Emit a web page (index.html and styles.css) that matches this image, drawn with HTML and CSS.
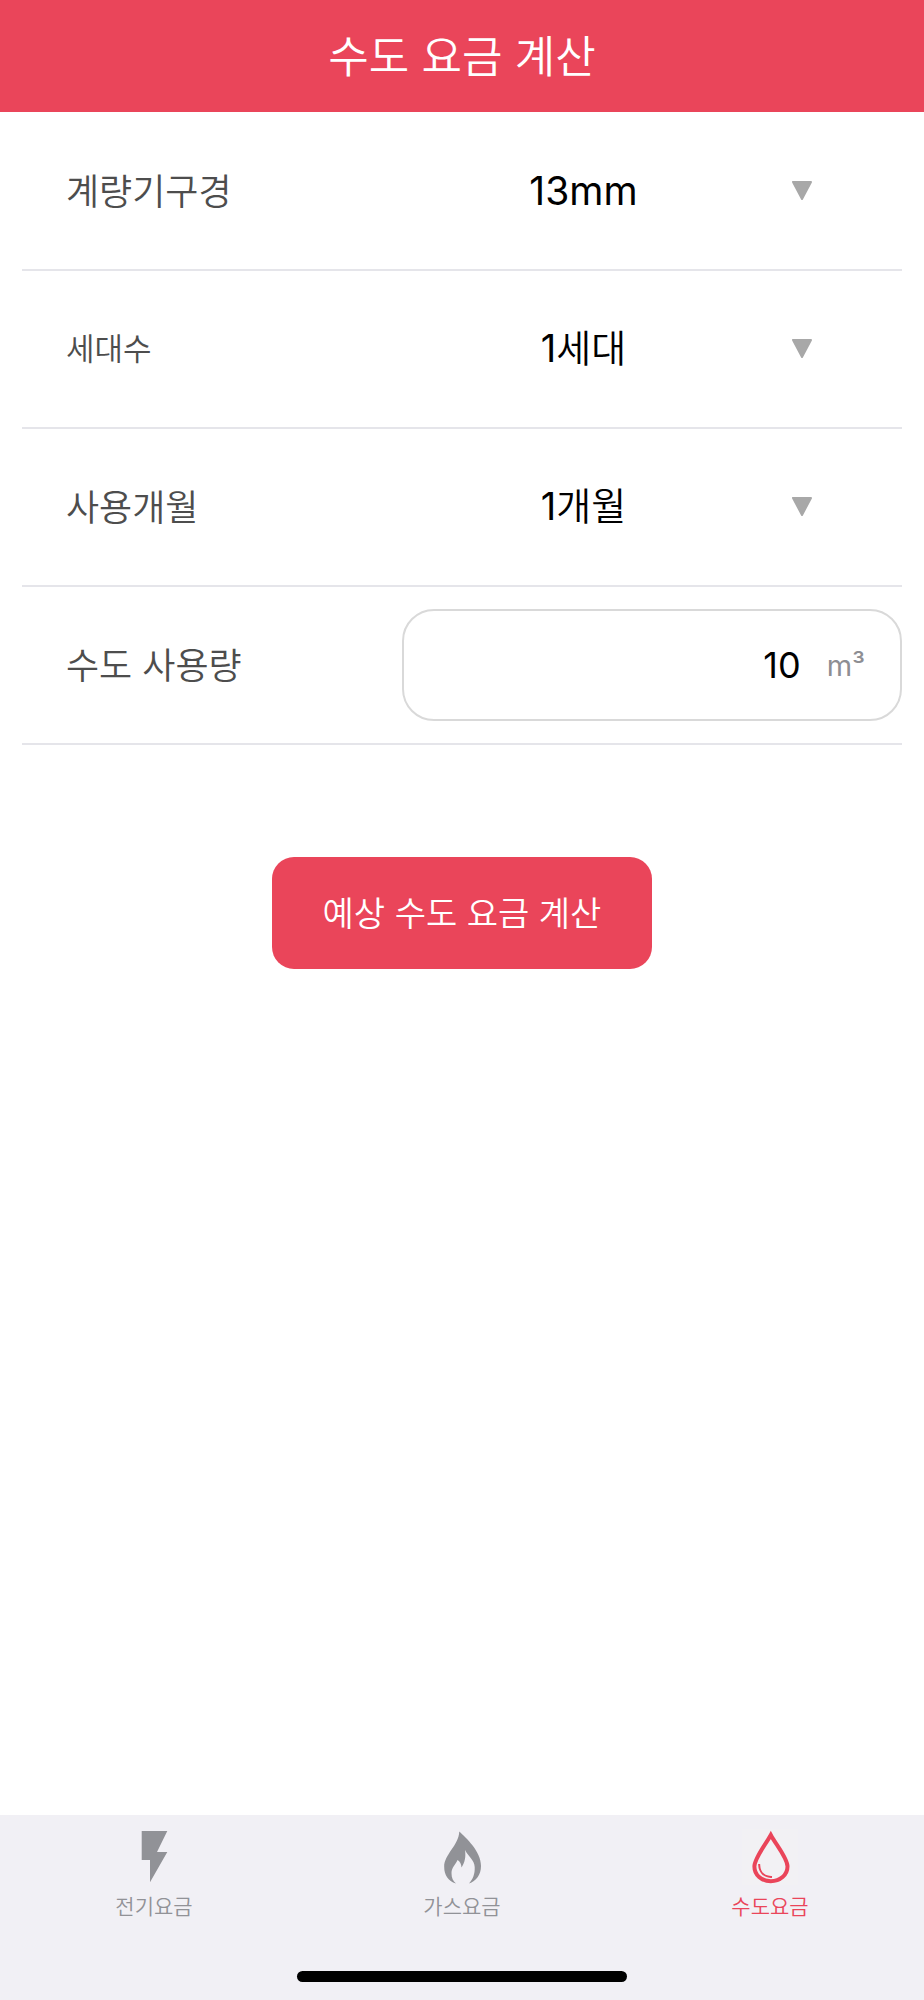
FILE: index.html
```html
<!DOCTYPE html>
<html lang="ko">
<head>
<meta charset="utf-8">
<meta name="viewport" content="width=device-width, initial-scale=1">
<title>수도 요금 계산</title>
<link rel="stylesheet" href="styles.css">
</head>
<body>
<header class="header"><h1 class="title">수도 요금 계산</h1></header>

<main class="main">
  <form class="form">
    <div class="row">
      <label class="label" for="caliber">계량기구경</label>
      <div class="picker">
        <select class="select select-latin" id="caliber"><option>13mm</option><option>20mm</option></select>
        <svg class="arrow" viewBox="0 0 20 20" aria-hidden="true"><path d="M1 1h18L10 18z"/></svg>
      </div>
    </div>
    <div class="row">
      <label class="label label-small" for="households">세대수</label>
      <div class="picker">
        <select class="select" id="households"><option>1세대</option><option>2세대</option></select>
        <svg class="arrow" viewBox="0 0 20 20" aria-hidden="true"><path d="M1 1h18L10 18z"/></svg>
      </div>
    </div>
    <div class="row">
      <label class="label" for="months">사용개월</label>
      <div class="picker">
        <select class="select" id="months"><option>1개월</option><option>2개월</option></select>
        <svg class="arrow" viewBox="0 0 20 20" aria-hidden="true"><path d="M1 1h18L10 18z"/></svg>
      </div>
    </div>
    <div class="row">
      <label class="label" for="usage">수도 사용량</label>
      <div class="field">
        <input class="input" id="usage" type="text" inputmode="numeric" value="10">
        <span class="unit">m³</span>
      </div>
    </div>
    <button class="submit" type="button">예상 수도 요금 계산</button>
  </form>
</main>

<footer class="footer">
  <nav class="tabs">
    <a class="tab" href="#electric">
      <svg class="icon" viewBox="0 0 56 56" aria-hidden="true"><path fill="currentColor" d="M15.7 2h25.6L31 23h10.3L24 53.3V31h-8.3z"/></svg>
      <span>전기요금</span>
    </a>
    <a class="tab" href="#gas">
      <svg class="icon" viewBox="0 0 56 56" aria-hidden="true"><path fill="currentColor" d="M25.300 2.500C32 9 47 22 47 37C47 46 42 52 35 54.500C39 50 41 45 40.700 38C40.500 31 34 27 31 21C32 28 31 33 27.500 38.500C27.300 35 26 32.500 23.500 31C22 35 17.500 38.500 17.500 44C17.500 49 19 52 22 54.500C14 52 10.200 46 10.200 38C10.200 25 24.500 17 25.300 2.500Z"/></svg>
      <span>가스요금</span>
    </a>
    <a class="tab tab-active" href="#water" aria-current="page">
      <svg class="icon" viewBox="0 0 56 56" fill="none" stroke="currentColor" aria-hidden="true"><path stroke-width="4" d="M28.800 6C24 15 12.400 29 12.400 37.500C12.400 46 19.500 52.200 28.800 52.200C38 52.200 45.500 46 45.500 37.500C45.500 29 33.500 15 28.800 6Z"/><path stroke-width="2" stroke-linecap="square" d="M17.200 36C17.500 43 22 47.600 29 48"/></svg>
      <span>수도요금</span>
    </a>
  </nav>
  <div class="home-bar"></div>
</footer>
</body>
</html>
```
FILE: styles.css
```css
* {
  box-sizing: border-box;
}

body {
  margin: 0;
  min-height: 100vh;
  display: flex;
  flex-direction: column;
  background: #fff;
  font-family: "Noto Sans CJK KR DemiLight", "Noto Sans CJK KR", sans-serif;
  font-weight: 350;
}

.header {
  display: flex;
  align-items: center;
  justify-content: center;
  min-height: 112px;
  padding-bottom: 4px;
  background: #ea455a;
  color: #fff;
}

.title {
  margin: 0;
  font-size: 44px;
  font-weight: inherit;
  line-height: 64px;
}

.main {
  flex: 1;
  padding: 1px 22px 0;
}

.form {
  display: flex;
  flex-direction: column;
}

.row {
  display: grid;
  grid-template-columns: minmax(0, 19fr) minmax(0, 25fr);
  align-items: center;
  min-height: 158px;
  border-bottom: 2px solid #e5e5ea;
}

.label {
  padding: 0 0 4px 44px;
  color: #4d4d4d;
  font-size: 36px;
  line-height: 52px;
}

.label-small {
  font-size: 31px;
}

.picker {
  display: grid;
  align-items: center;
}

.select,
.arrow {
  grid-area: 1 / 1;
}

.select {
  width: 100%;
  height: 112px;
  padding: 0 137px 2px 0;
  appearance: none;
  border: 0;
  background: transparent;
  color: #000;
  font-family: Inter, "Noto Sans CJK KR DemiLight", "Noto Sans CJK KR", sans-serif;
  font-size: 38px;
  font-weight: 380;
  text-align: center;
  text-align-last: center;
}

.select-latin {
  font-size: 39px;
}

.arrow {
  width: 20px;
  height: 20px;
  margin-right: 90px;
  justify-self: end;
  overflow: visible;
  pointer-events: none;
  fill: #a8a8a8;
  stroke: #a8a8a8;
  stroke-width: 2px;
  stroke-linejoin: round;
}

.field {
  display: flex;
  align-items: center;
  gap: 26px;
  height: 112px;
  padding: 0 35px;
  border: 2px solid #d9d9d9;
  border-radius: 32px;
}

.input {
  flex: 1;
  min-width: 0;
  height: 100%;
  padding: 0;
  border: 0;
  outline: 0;
  background: transparent;
  color: #000;
  font-family: Inter, sans-serif;
  font-size: 36px;
  font-weight: 400;
  text-align: right;
}

.unit {
  color: #8e8e93;
  font-family: Inter, sans-serif;
  font-size: 29px;
  font-weight: 400;
}

.submit {
  align-self: center;
  min-height: 112px;
  margin-top: 112px;
  padding: 0 51px 4px;
  border: 0;
  border-radius: 22px;
  background: #ea455a;
  color: #fff;
  font-family: inherit;
  font-size: 34px;
  font-weight: inherit;
}

.footer {
  display: flex;
  flex-direction: column;
  align-items: center;
  justify-content: space-between;
  min-height: 185px;
  padding: 14px 0 18px;
  background: #f1f0f5;
}

.tabs {
  display: grid;
  grid-template-columns: repeat(3, 1fr);
  width: 100%;
}

.tab {
  display: flex;
  flex-direction: column;
  align-items: center;
  gap: 4px;
  color: #919297;
  font-size: 21px;
  line-height: 32px;
  text-decoration: none;
}

.tab-active {
  color: #ea455a;
}

.icon {
  width: 56px;
  height: 56px;
}

.tab-active .icon {
  background: #f2f1f4;
}

.home-bar {
  width: 330px;
  height: 11px;
  border-radius: 6px;
  background: #000;
}
```
